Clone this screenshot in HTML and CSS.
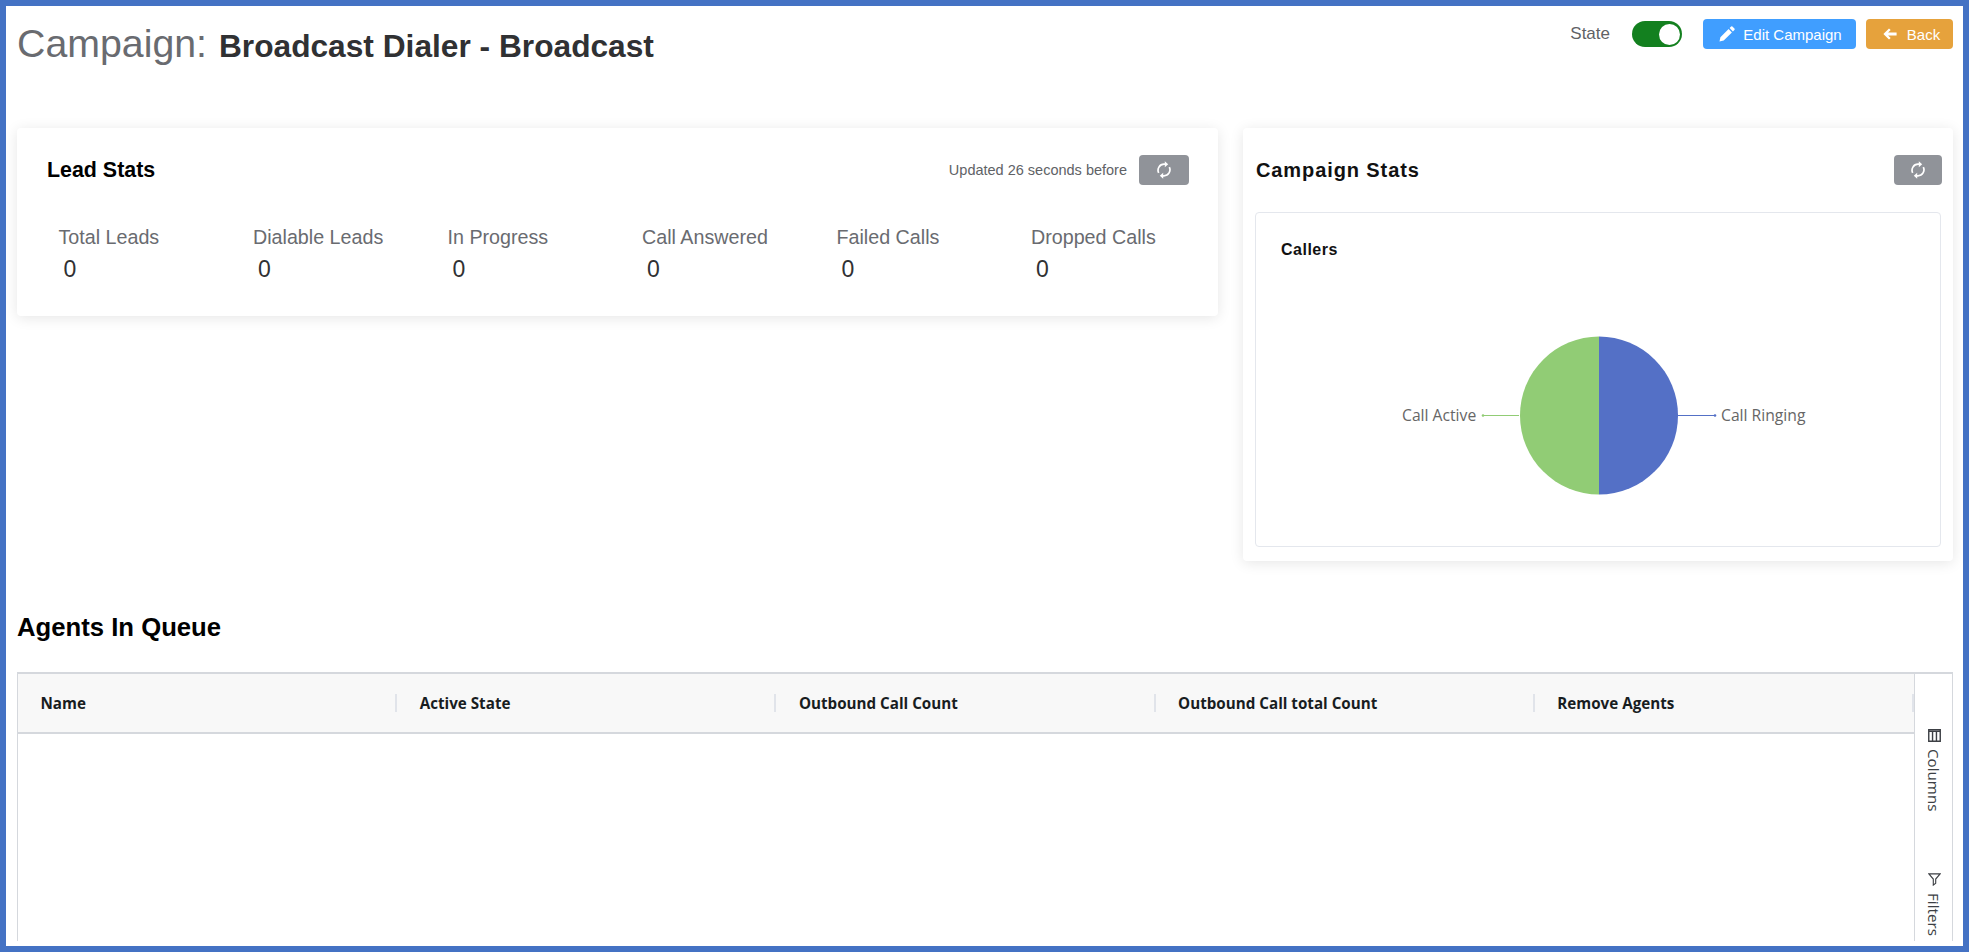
FILE: index.html
```html
<!DOCTYPE html>
<html lang="en">
<head>
<meta charset="utf-8">
<title>Campaign: Broadcast Dialer - Broadcast</title>
<link rel="stylesheet" href="styles.css">
</head>
<body>
<div class="page">
  <header class="topbar">
    <h1 class="title"><span class="title-label">Campaign:</span> <span class="title-name">Broadcast Dialer - Broadcast</span></h1>
    <div class="actions">
      <span class="state-label">State</span>
      <span class="toggle"><span class="knob"></span></span>
      <button class="btn btn-edit" type="button">
        <svg class="icon-pencil" viewBox="0 0 16 16"><path d="M0.5 15.5l0.9-4.2L9.6 3.1l3.3 3.3-8.2 8.2zM10.6 2.1l1.5-1.5a0.9 0.9 0 0 1 1.3 0l2 2a0.9 0.9 0 0 1 0 1.3l-1.5 1.5z"/></svg>
        Edit Campaign
      </button>
      <button class="btn btn-back" type="button">
        <svg class="icon-back" viewBox="0 0 14 12"><path d="M0.4 6L6 0.4l1.7 1.7-2.6 2.5H13.6v2.8H5.1l2.6 2.5L6 11.6z"/></svg>
        Back
      </button>
    </div>
  </header>

  <section class="cards">
    <div class="card lead-card">
      <div class="card-head">
        <h2 class="lead-title">Lead Stats</h2>
        <div class="head-right">
          <span class="updated">Updated 26 seconds before</span>
          <button class="btn-refresh" type="button" aria-label="Refresh">
            <svg class="icon-refresh" viewBox="0 0 14 18"><path d="M1.7 11.9A6 6 0 0 1 7 3.2h1.2M12.3 6.1A6 6 0 0 1 7 14.8H5.8" fill="none" stroke="currentColor" stroke-width="1.7"/><path d="M7.8 0.2l3.4 3-3.4 3zM6.2 11.8l-3.4 3 3.4 3z" fill="currentColor"/></svg>
          </button>
        </div>
      </div>
      <div class="stats">
        <div class="stat"><div class="stat-label">Total Leads</div><div class="stat-value">0</div></div>
        <div class="stat"><div class="stat-label">Dialable Leads</div><div class="stat-value">0</div></div>
        <div class="stat"><div class="stat-label">In Progress</div><div class="stat-value">0</div></div>
        <div class="stat"><div class="stat-label">Call Answered</div><div class="stat-value">0</div></div>
        <div class="stat"><div class="stat-label">Failed Calls</div><div class="stat-value">0</div></div>
        <div class="stat"><div class="stat-label">Dropped Calls</div><div class="stat-value">0</div></div>
      </div>
    </div>

    <div class="card campaign-card">
      <div class="campaign-head">
        <h2 class="campaign-title">Campaign Stats</h2>
        <button class="btn-refresh" type="button" aria-label="Refresh">
          <svg class="icon-refresh" viewBox="0 0 14 18"><path d="M1.7 11.9A6 6 0 0 1 7 3.2h1.2M12.3 6.1A6 6 0 0 1 7 14.8H5.8" fill="none" stroke="currentColor" stroke-width="1.7"/><path d="M7.8 0.2l3.4 3-3.4 3zM6.2 11.8l-3.4 3 3.4 3z" fill="currentColor"/></svg>
        </button>
      </div>
      <div class="chart-box">
        <h3 class="chart-title">Callers</h3>
        <svg class="pie" viewBox="0 0 685 270" width="685" height="270">
          <path d="M226 155.500H263" class="line-green"/>
          <path d="M422 155.500H459" class="line-blue"/>
          <circle cx="227" cy="155.500" r="1.300" class="dot-green"/>
          <circle cx="459" cy="155.500" r="1.300" class="dot-blue"/>
          <path d="M343 76.500a79 79 0 0 0 0 158z" class="slice-green"/>
          <path d="M343 76.500a79 79 0 0 1 0 158z" class="slice-blue"/>
          <text x="146" y="160.500" class="pie-label">Call Active</text>
          <text x="465" y="160.500" class="pie-label">Call Ringing</text>
        </svg>
      </div>
    </div>
  </section>

  <h2 class="queue-title">Agents In Queue</h2>

  <section class="grid">
    <div class="grid-main">
      <div class="grid-header">
        <div class="col">Name</div>
        <div class="col">Active State</div>
        <div class="col">Outbound Call Count</div>
        <div class="col">Outbound Call total Count</div>
        <div class="col">Remove Agents</div>
      </div>
      <div class="grid-body"></div>
    </div>
    <aside class="side">
      <div class="side-tab side-columns">
        <svg class="side-icon" viewBox="0 0 12 12"><path d="M0.700 0.700h10.600v10.600H0.700zM4.200 2.500v8.800M7.800 2.500v8.800M0.700 2.200h10.600" fill="none" stroke="#3c3f44" stroke-width="1.300"/></svg>
        <span class="side-text">Columns</span>
      </div>
      <div class="side-tab side-filters">
        <svg class="side-icon" viewBox="0 0 14 14"><path d="M1 1h12L8.300 6.500v4.500L5.700 13V6.500z" fill="none" stroke="#3c3f44" stroke-width="1.200"/></svg>
        <span class="side-text">Filters</span>
      </div>
    </aside>
  </section>
</div>
</body>
</html>
```

FILE: styles.css
```css
* { box-sizing: border-box; }
html, body { margin: 0; padding: 0; background: #fff; }
body { font-family: "Liberation Sans", Arial, sans-serif; }
h1, h2, h3 { margin: 0; }
button { font-family: inherit; cursor: pointer; }

.page {
  width: 1969px;
  height: 952px;
  border: 6px solid #4472c4;
  padding: 0 10px 5px 11px;
  display: flex;
  flex-direction: column;
  overflow: hidden;
  background: #fff;
}

/* Top bar */
.topbar {
  height: 122px;
  display: flex;
  justify-content: space-between;
  align-items: flex-start;
  flex: none;
}
.title {
  font-weight: 400;
  margin-top: 14px;
  line-height: 46px;
  white-space: nowrap;
}
.title-label { font-size: 39.300px; color: #696b70; margin-right: 3px; }
.title-name { font-size: 31.700px; font-weight: 700; color: #303133; }
.actions {
  display: flex;
  align-items: center;
  margin-top: 13px;
}
.state-label { font-size: 17px; color: #606266; margin-right: 22px; }
.toggle {
  width: 50px;
  height: 26px;
  border-radius: 13px;
  background: #13801f;
  display: flex;
  justify-content: flex-end;
  align-items: center;
  padding-right: 2px;
  margin-right: 21px;
}
.knob { width: 21px; height: 21px; border-radius: 50%; background: #fff; }
.btn {
  height: 30px;
  border: 0;
  border-radius: 4px;
  color: #fff;
  font-size: 15px;
  display: flex;
  align-items: center;
  justify-content: center;
  padding: 0;
}
.btn-edit { width: 153px; background: #409eff; margin-right: 10px; gap: 8px; padding-left: 2px; }
.btn-back { width: 87px; background: #e6a23c; gap: 10px; padding-left: 4px; }
.icon-pencil { width: 16px; height: 16px; fill: #fff; }
.icon-back { width: 14px; height: 12px; fill: #fff; }

/* Cards */
.cards {
  display: grid;
  grid-template-columns: 1201px 710px;
  column-gap: 25px;
  align-items: start;
  flex: none;
}
.card {
  background: #fff;
  border-radius: 4px;
  box-shadow: 0 2px 14px rgba(0, 0, 0, 0.1);
}
.lead-card { height: 188px; padding: 27px 29px 0 30px; }
.card-head { display: flex; justify-content: space-between; align-items: center; height: 30px; }
.lead-title { font-size: 21.400px; font-weight: 700; color: #000; }
.head-right { display: flex; align-items: center; gap: 12px; }
.updated { font-size: 14.500px; color: #606266; }
.btn-refresh {
  width: 50px;
  height: 30px;
  border: 0;
  border-radius: 4px;
  background: #909399;
  color: #fff;
  display: flex;
  align-items: center;
  justify-content: center;
  padding: 0;
}
.icon-refresh { width: 14px; height: 18px; }
.stats {
  display: grid;
  grid-template-columns: repeat(6, 194.500px);
  margin: 40px 0 0 11.500px;
}
.stat-label { font-size: 19.700px; line-height: 24px; color: #696b70; white-space: nowrap; }
.stat-value { font-size: 23px; line-height: 28px; color: #303133; margin: 6px 0 0 5px; }

.campaign-card { height: 433px; padding: 27px 12px 14px 12px; }
.campaign-head { display: flex; justify-content: space-between; align-items: center; height: 30px; }
.campaign-head .btn-refresh { width: 48px; margin-right: -1px; }
.campaign-title { font-size: 20px; letter-spacing: 0.900px; font-weight: 700; color: #111; margin-left: 1px; }
.chart-box {
  height: 335px;
  margin-top: 27px;
  border: 1px solid #e4e7ed;
  border-radius: 4px;
  padding: 27px 0 0 26px;
}
.chart-title { font-size: 16px; letter-spacing: 0.500px; font-weight: 700; color: #111; line-height: 20px; margin-left: -1px; }
.pie { display: block; margin: 0 0 0 -26px; }
.slice-green { fill: #91cc75; }
.slice-blue { fill: #5470c6; }
.line-green { stroke: #91cc75; stroke-width: 1; fill: none; }
.line-blue { stroke: #5470c6; stroke-width: 1; fill: none; }
.dot-green { fill: #91cc75; }
.dot-blue { fill: #5470c6; }
.pie-label { font-family: "Open Sans", sans-serif; font-size: 15.700px; fill: #666; }

/* Queue */
.queue-title {
  font-size: 25.700px;
  font-weight: 700;
  color: #000;
  flex: none;
  line-height: 30px;
  margin-top: 51px;
  margin-bottom: 30px;
}
.grid {
  flex: 1;
  min-height: 0;
  display: flex;
  border: 1px solid #d5d8dd;
  border-top-width: 2px;
  border-bottom: 0;
}
.grid-main { flex: 1; display: flex; flex-direction: column; min-width: 0; }
.grid-header {
  height: 60px;
  background: #f8f8f8;
  border-bottom: 2px solid #d5d8dd;
  display: grid;
  grid-template-columns: repeat(5, 1fr);
  align-items: center;
}
.col {
  font-family: "Open Sans", sans-serif;
  font-size: 15.200px;
  font-weight: 700;
  color: #181d1f;
  padding-left: 22.500px;
  height: 18px;
  line-height: 18px;
  border-right: 2px solid #e1e4ea;
  white-space: nowrap;
}
.grid-body { flex: 1; }
.side {
  width: 38px;
  flex: none;
  border-left: 1px solid #d5d8dd;
  padding: 55px 0 0 12px;
  overflow: hidden;
}
.side-tab { display: flex; flex-direction: column; align-items: center; width: 14px; }
.side-columns { height: 144px; gap: 7px; }
.side-filters { gap: 7px; }
.side-icon { width: 13px; height: 13px; flex: none; }
.side-text {
  writing-mode: vertical-rl;
  font-family: "Open Sans", sans-serif;
  font-size: 15.200px;
  line-height: 14px;
  color: #3c3f44;
}
```
